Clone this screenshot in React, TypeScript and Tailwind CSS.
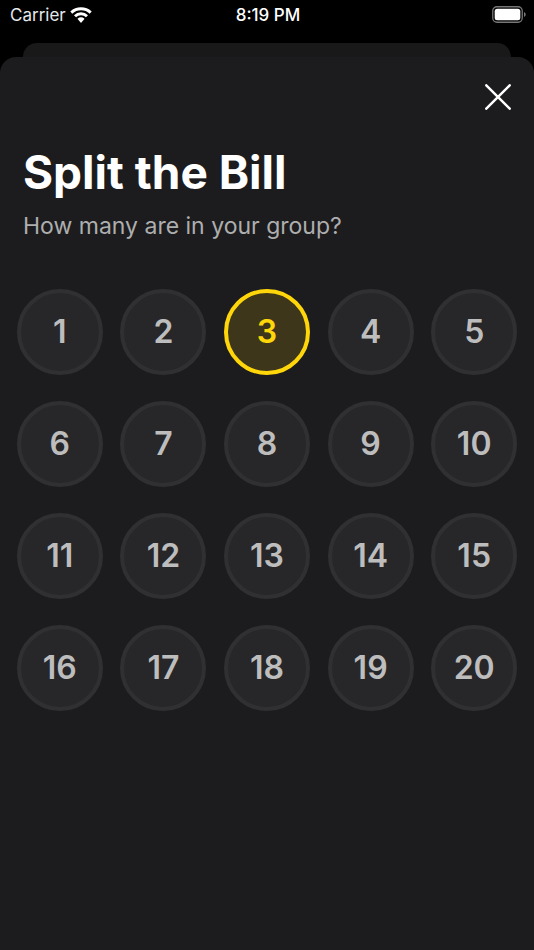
import React, { useState } from 'react';

const GROUP_SIZES = Array.from({ length: 20 }, (_, i) => i + 1);

const WifiIcon: React.FC<{ className?: string }> = ({ className }) => (
    <svg viewBox="0 0 22 16" className={className} fill="none" stroke="currentColor" strokeWidth="2.9" aria-hidden="true">
        <path d="M1.300 5.600C6.700.500 15.300.500 20.700 5.600" />
        <path d="M5 9.200c3.300-3.200 8.700-3.200 12 0" />
        <path d="M11 10.300c1.200 0 2.300.4 3.200 1.100.3.200.3.500 0 .8l-2.800 3.300c-.2.300-.6.300-.8 0l-2.800-3.300c-.3-.3-.3-.6 0-.8.9-.7 2-1.100 3.200-1.100z" fill="currentColor" stroke="none" />
    </svg>
);

const BatteryIcon: React.FC<{ className?: string }> = ({ className }) => (
    <svg viewBox="0 0 34 17" className={className} aria-hidden="true">
        <rect x="0.75" y="0.75" width="29.500" height="15.500" rx="4.200" fill="none" stroke="#777777" strokeWidth="1.300" />
        <rect x="2.700" y="2.700" width="25.600" height="11.600" rx="2.500" fill="white" />
        <path d="M32 6v5c1-.4 1.700-1.400 1.700-2.500S33 6.400 32 6z" fill="#777777" />
    </svg>
);

const CloseIcon: React.FC<{ className?: string }> = ({ className }) => (
    <svg viewBox="0 0 26 26" className={className} fill="none" stroke="currentColor" strokeWidth="2.500" strokeLinecap="round" aria-hidden="true">
        <path d="M1.300 1.300l23.400 23.400M24.700 1.300L1.300 24.700" />
    </svg>
);

const StatusBar: React.FC = () => (
    <div className="grid h-[43px] grid-cols-3 items-start pt-1 pr-2 pl-[10px] text-[17px] leading-[22px] text-white">
        <div className="flex items-center space-x-1">
            <span className="text-gray-200">Carrier</span>
            <WifiIcon className="h-4 w-[22px]" />
        </div>
        <div className="text-center font-medium">8:19 PM</div>
        <div className="flex justify-end pt-[2px]">
            <BatteryIcon className="h-[17px] w-[34px]" />
        </div>
    </div>
);

const SizeButton: React.FC<{ size: number; selected: boolean; onSelect: (size: number) => void }> = ({ size, selected, onSelect }) => (
    <button
        type="button"
        aria-pressed={selected}
        onClick={() => onSelect(size)}
        className={`size-[86px] rounded-full border-4 text-[32px] leading-10 font-semibold ${
            selected ? 'border-[#ffd60a] bg-[#3d361b] text-[#ffd60a]' : 'border-[#303032] bg-[#272729] text-[#bdbdbd]'
        }`}
    >
        {size}
    </button>
);

const App: React.FC = () => {
    const [groupSize, setGroupSize] = useState(3);

    return (
        <div className="flex min-h-screen flex-col bg-black font-['Inter',sans-serif]">
            <StatusBar />
            {/* Edge of the card behind the sheet */}
            <div className="mx-[23px] h-[14px] rounded-t-[14px] bg-[#191919]" />
            <main className="flex-1 rounded-t-[16px] bg-[#1c1c1e] pb-6">
                <div className="flex justify-end px-[23px] pt-[27px]">
                    <button type="button" aria-label="Close" className="text-white">
                        <CloseIcon className="size-[26px]" />
                    </button>
                </div>
                <header className="px-[23px] pt-9">
                    <h1 className="text-[46px] leading-[52px] font-bold text-white">Split the Bill</h1>
                    <p className="mt-3 text-[23px] leading-[32px] text-[#aeaeae]">How many are in your group?</p>
                </header>
                <div className="mt-[47px] grid grid-cols-5 justify-items-center gap-y-[26px] px-2" role="group" aria-label="Group size">
                    {GROUP_SIZES.map((size) => (
                        <SizeButton key={size} size={size} selected={size === groupSize} onSelect={setGroupSize} />
                    ))}
                </div>
            </main>
        </div>
    );
};

export default App;
